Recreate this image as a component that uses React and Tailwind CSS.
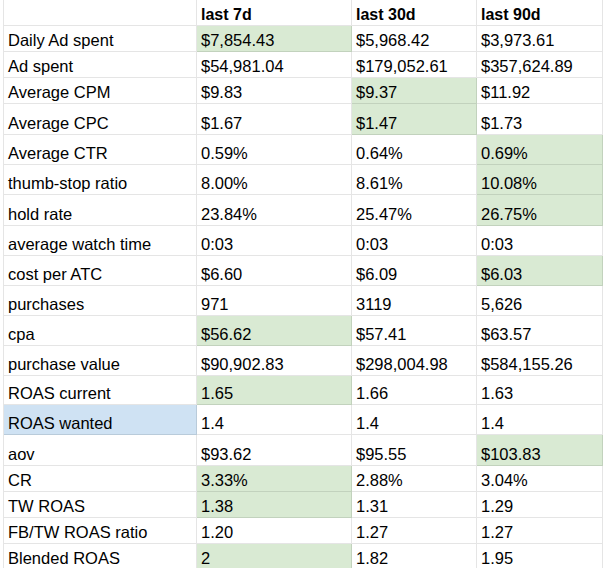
const G = "bg-[#d9ead3]";
const B = "bg-[#cfe2f3]";

const rows = [
  { h: "h-[26px]", cells: ["Daily Ad spent", "$7,854.43", "$5,968.42", "$3,973.61"], fill: { 1: G } },
  { h: "h-[26px]", cells: ["Ad spent", "$54,981.04", "$179,052.61", "$357,624.89"], fill: {} },
  { h: "h-[26px]", cells: ["Average CPM", "$9.83", "$9.37", "$11.92"], fill: { 2: G } },
  { h: "h-[31px]", cells: ["Average CPC", "$1.67", "$1.47", "$1.73"], fill: { 2: G } },
  { h: "h-[30px]", cells: ["Average CTR", "0.59%", "0.64%", "0.69%"], fill: { 3: G } },
  { h: "h-[30px]", cells: ["thumb-stop ratio", "8.00%", "8.61%", "10.08%"], fill: { 3: G } },
  { h: "h-[31px]", cells: ["hold rate", "23.84%", "25.47%", "26.75%"], fill: { 3: G } },
  { h: "h-[30px]", cells: ["average watch time", "0:03", "0:03", "0:03"], fill: {} },
  { h: "h-[30px]", cells: ["cost per ATC", "$6.60", "$6.09", "$6.03"], fill: { 3: G } },
  { h: "h-[30px]", cells: ["purchases", "971", "3119", "5,626"], fill: {} },
  { h: "h-[30px]", cells: ["cpa", "$56.62", "$57.41", "$63.57"], fill: { 1: G } },
  { h: "h-[30px]", cells: ["purchase value", "$90,902.83", "$298,004.98", "$584,155.26"], fill: {} },
  { h: "h-[29px]", cells: ["ROAS current", "1.65", "1.66", "1.63"], fill: { 1: G } },
  { h: "h-[30px]", cells: ["ROAS wanted", "1.4", "1.4", "1.4"], fill: { 0: B } },
  { h: "h-[31px]", cells: ["aov", "$93.62", "$95.55", "$103.83"], fill: { 3: G } },
  { h: "h-[26px]", cells: ["CR", "3.33%", "2.88%", "3.04%"], fill: { 1: G } },
  { h: "h-[26px]", cells: ["TW ROAS", "1.38", "1.31", "1.29"], fill: { 1: G } },
  { h: "h-[26px]", cells: ["FB/TW ROAS ratio", "1.20", "1.27", "1.27"], fill: {} },
  { h: "h-[26px]", cells: ["Blended ROAS", "2", "1.82", "1.95"], fill: { 1: G } },
];

const widths = ["w-[193px]", "w-[155px]", "w-[125px]", "w-[126px]"];

const Cell = ({ w, fill, bold, children }) => (
  <div
    className={`${w} ${fill || "bg-white"} shrink-0 flex items-end px-[4px] pb-[1px] border-r border-b border-black/10 whitespace-nowrap overflow-hidden ${bold ? "font-bold text-[16px]" : ""}`}
  >
    {children}
  </div>
);

export default function App() {
  return (
    <div className="w-[604px] h-[568px] overflow-hidden bg-white pl-[3px] text-[16.5px] leading-[19px] text-black font-['Liberation_Sans',Arial,sans-serif]">
      <div className="border-l border-black/10 w-fit">
        <div className="flex h-[26px]">
          <Cell w={widths[0]} />
          <Cell w={widths[1]} bold>last 7d</Cell>
          <Cell w={widths[2]} bold>last 30d</Cell>
          <Cell w={widths[3]} bold>last 90d</Cell>
        </div>
        {rows.map((r) => (
          <div key={r.cells[0]} className={`flex ${r.h}`}>
            {r.cells.map((c, i) => (
              <Cell key={i} w={widths[i]} fill={r.fill[i]}>
                {c}
              </Cell>
            ))}
          </div>
        ))}
      </div>
    </div>
  );
}
